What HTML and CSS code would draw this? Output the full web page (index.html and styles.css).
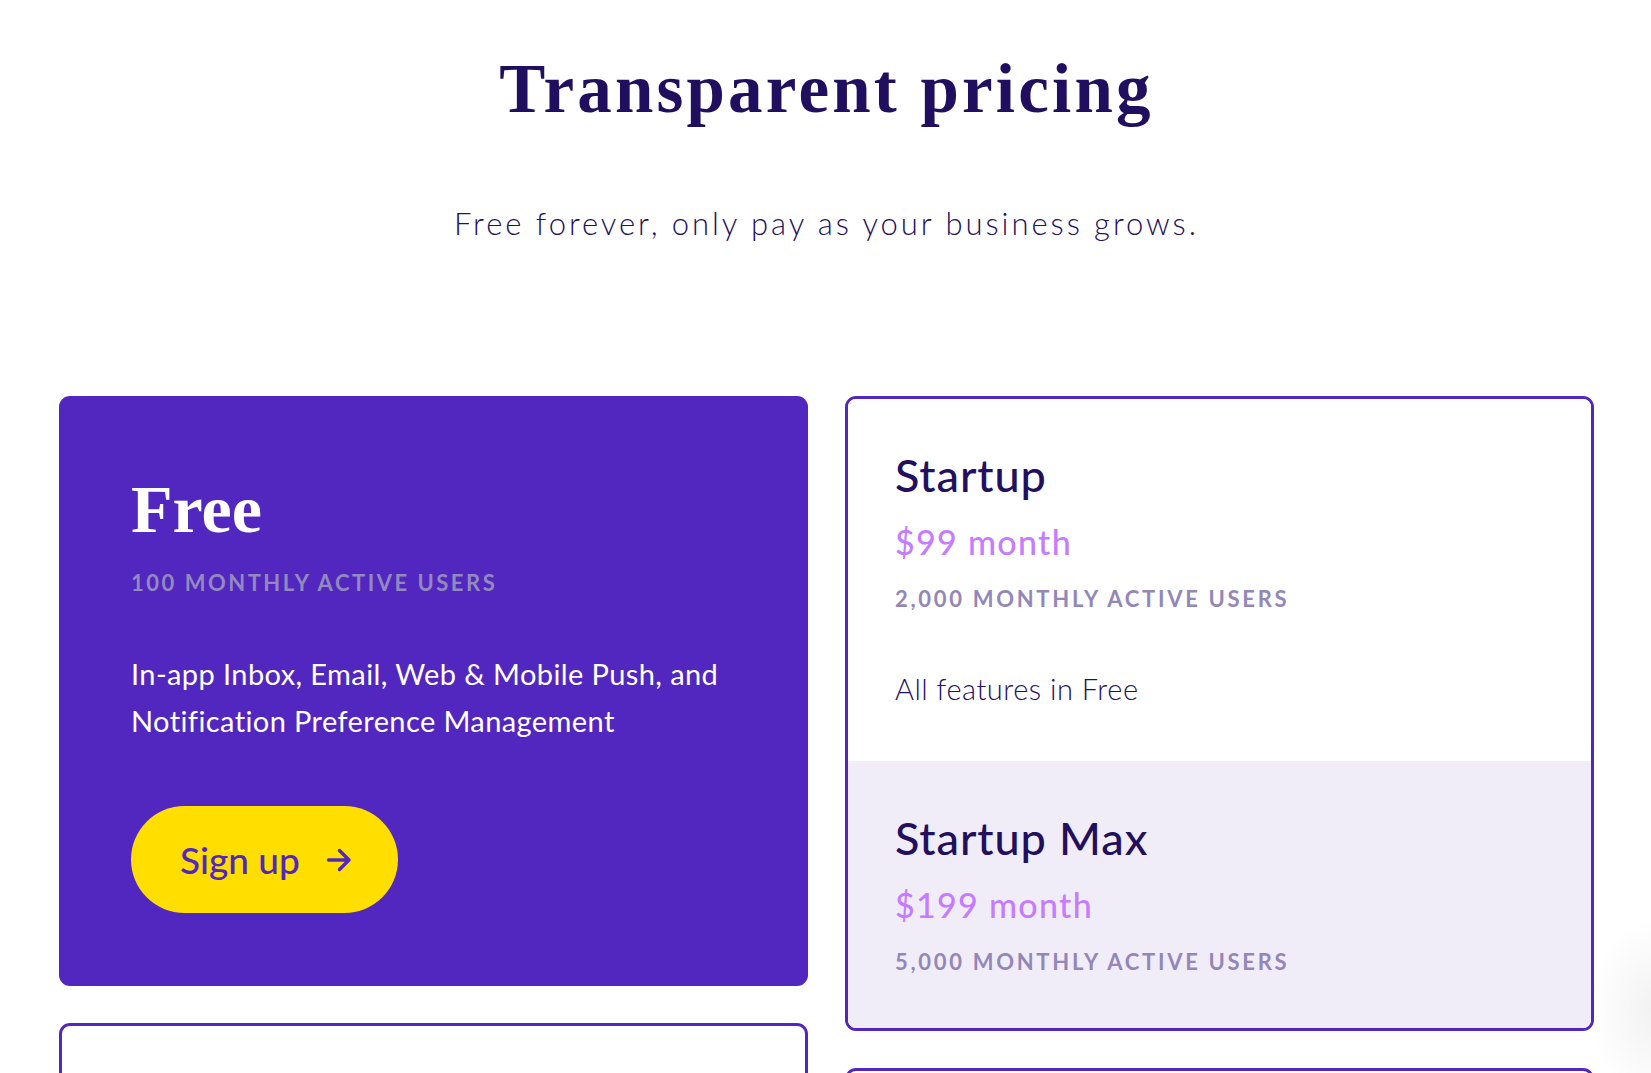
FILE: index.html
```html
<!DOCTYPE html>
<html lang="en">
<head>
<meta charset="utf-8">
<title>Transparent pricing</title>
<link rel="stylesheet" href="styles.css">
</head>
<body>
<main class="page">
  <header class="intro">
    <h1 class="title">Transparent pricing</h1>
    <p class="subtitle">Free forever, only pay as your business grows.</p>
  </header>

  <section class="plans">
    <div class="col">
      <article class="card card-free">
        <h2 class="free-name">Free</h2>
        <p class="users users-free">100 monthly active users</p>
        <p class="free-desc">In-app Inbox, Email, Web &amp; Mobile Push, and Notification Preference Management</p>
        <a class="signup" href="#">
          <span>Sign up</span>
          <svg class="arrow" viewBox="0 0 26 28" width="26" height="28" aria-hidden="true">
            <path d="M2.5 14 H23 M13.5 4.5 L23 14 L13.5 23.5" fill="none" stroke="currentColor" stroke-width="3.4" stroke-linecap="round" stroke-linejoin="round"/>
          </svg>
        </a>
      </article>
      <article class="card card-outline card-empty"></article>
    </div>

    <div class="col">
      <article class="card card-outline card-split">
        <div class="tier">
          <h3 class="tier-name">Startup</h3>
          <p class="price">$99 month</p>
          <p class="users">2,000 monthly active users</p>
          <p class="feature">All features in Free</p>
        </div>
        <div class="tier tier-alt">
          <h3 class="tier-name">Startup Max</h3>
          <p class="price">$199 month</p>
          <p class="users">5,000 monthly active users</p>
        </div>
      </article>
      <article class="card card-outline card-empty"></article>
    </div>
  </section>
</main>
<div class="widget-shadow" aria-hidden="true"></div>
</body>
</html>
```

FILE: styles.css
```css
* { box-sizing: border-box; }

html, body {
  margin: 0;
  padding: 0;
  background: #ffffff;
}

body {
  font-family: Lato, "Noto Sans", sans-serif;
  color: #23105e;
  overflow: hidden;
}

.page {
  padding: 0 57px 0 59px;
}

.intro {
  display: flex;
  flex-direction: column;
  align-items: center;
}

.title {
  margin: 55px 0 0;
  font-family: "Liberation Serif", "Times New Roman", serif;
  font-weight: 700;
  font-size: 69px;
  line-height: 1;
  letter-spacing: 3.2px;
  color: #200e5f;
}

.subtitle {
  margin: 84px 0 0;
  font-family: Lato, sans-serif;
  font-weight: 300;
  font-size: 31px;
  line-height: 1;
  letter-spacing: 2.95px;
  color: #23105e;
}

.plans {
  margin-top: 157px;
  display: grid;
  grid-template-columns: 1fr 1fr;
  column-gap: 37px;
  align-items: start;
}

.col {
  display: flex;
  flex-direction: column;
  gap: 37px;
}

.card {
  border-radius: 11px;
}

.card-free {
  background: #5227c0;
  height: 590px;
  padding: 79px 60px 0 72px;
  color: #ffffff;
}

.card-outline {
  border: 3px solid #5227c0;
  background: #ffffff;
  overflow: hidden;
}

.card-empty {
  height: 400px;
}

.free-name {
  margin: 0;
  font-family: "Liberation Serif", "Times New Roman", serif;
  font-weight: 700;
  font-size: 68px;
  line-height: 1;
  color: #ffffff;
}

.users {
  margin: 29px 0 0;
  font-family: Lato, sans-serif;
  font-weight: 700;
  font-size: 22px;
  line-height: 1;
  letter-spacing: 2.7px;
  text-transform: uppercase;
  color: #9287b8;
}

.users-free {
  margin-top: 29px;
  letter-spacing: 2.5px;
  color: #9289bf;
}

.free-desc {
  margin: 56px 0 0;
  font-size: 29px;
  line-height: 47px;
  font-weight: 400;
  letter-spacing: 0.4px;
  color: #ffffff;
}

.signup {
  margin-top: 62px;
  display: inline-flex;
  align-items: center;
  gap: 26px;
  height: 107px;
  padding: 0 46px 0 49px;
  border-radius: 54px;
  background: #ffde00;
  color: #5227c0;
  text-decoration: none;
  font-size: 37px;
  font-weight: 500;
  line-height: 1;
}

.arrow {
  display: block;
}

.tier {
  padding: 54px 47px 58px;
  background: #ffffff;
}

.tier-alt {
  background: #f1edf8;
  padding-top: 55px;
  padding-bottom: 55px;
}

.tier-name {
  margin: 0;
  font-size: 45px;
  font-weight: 500;
  line-height: 1;
  letter-spacing: 0.9px;
  color: #22105e;
}

.price {
  margin: 27px 0 0;
  font-size: 34px;
  font-weight: 500;
  line-height: 1;
  letter-spacing: 1.3px;
  color: #c57cff;
}

.feature {
  margin: 64px 0 0;
  font-size: 29px;
  font-weight: 300;
  line-height: 1;
  letter-spacing: 0.5px;
  color: #23105e;
}

.widget-shadow {
  position: fixed;
  right: 0;
  top: 900px;
  width: 70px;
  height: 200px;
  background: radial-gradient(ellipse 60px 90px at 100% 55%, rgba(0, 0, 0, 0.05), rgba(0, 0, 0, 0) 100%);
  pointer-events: none;
}
```
